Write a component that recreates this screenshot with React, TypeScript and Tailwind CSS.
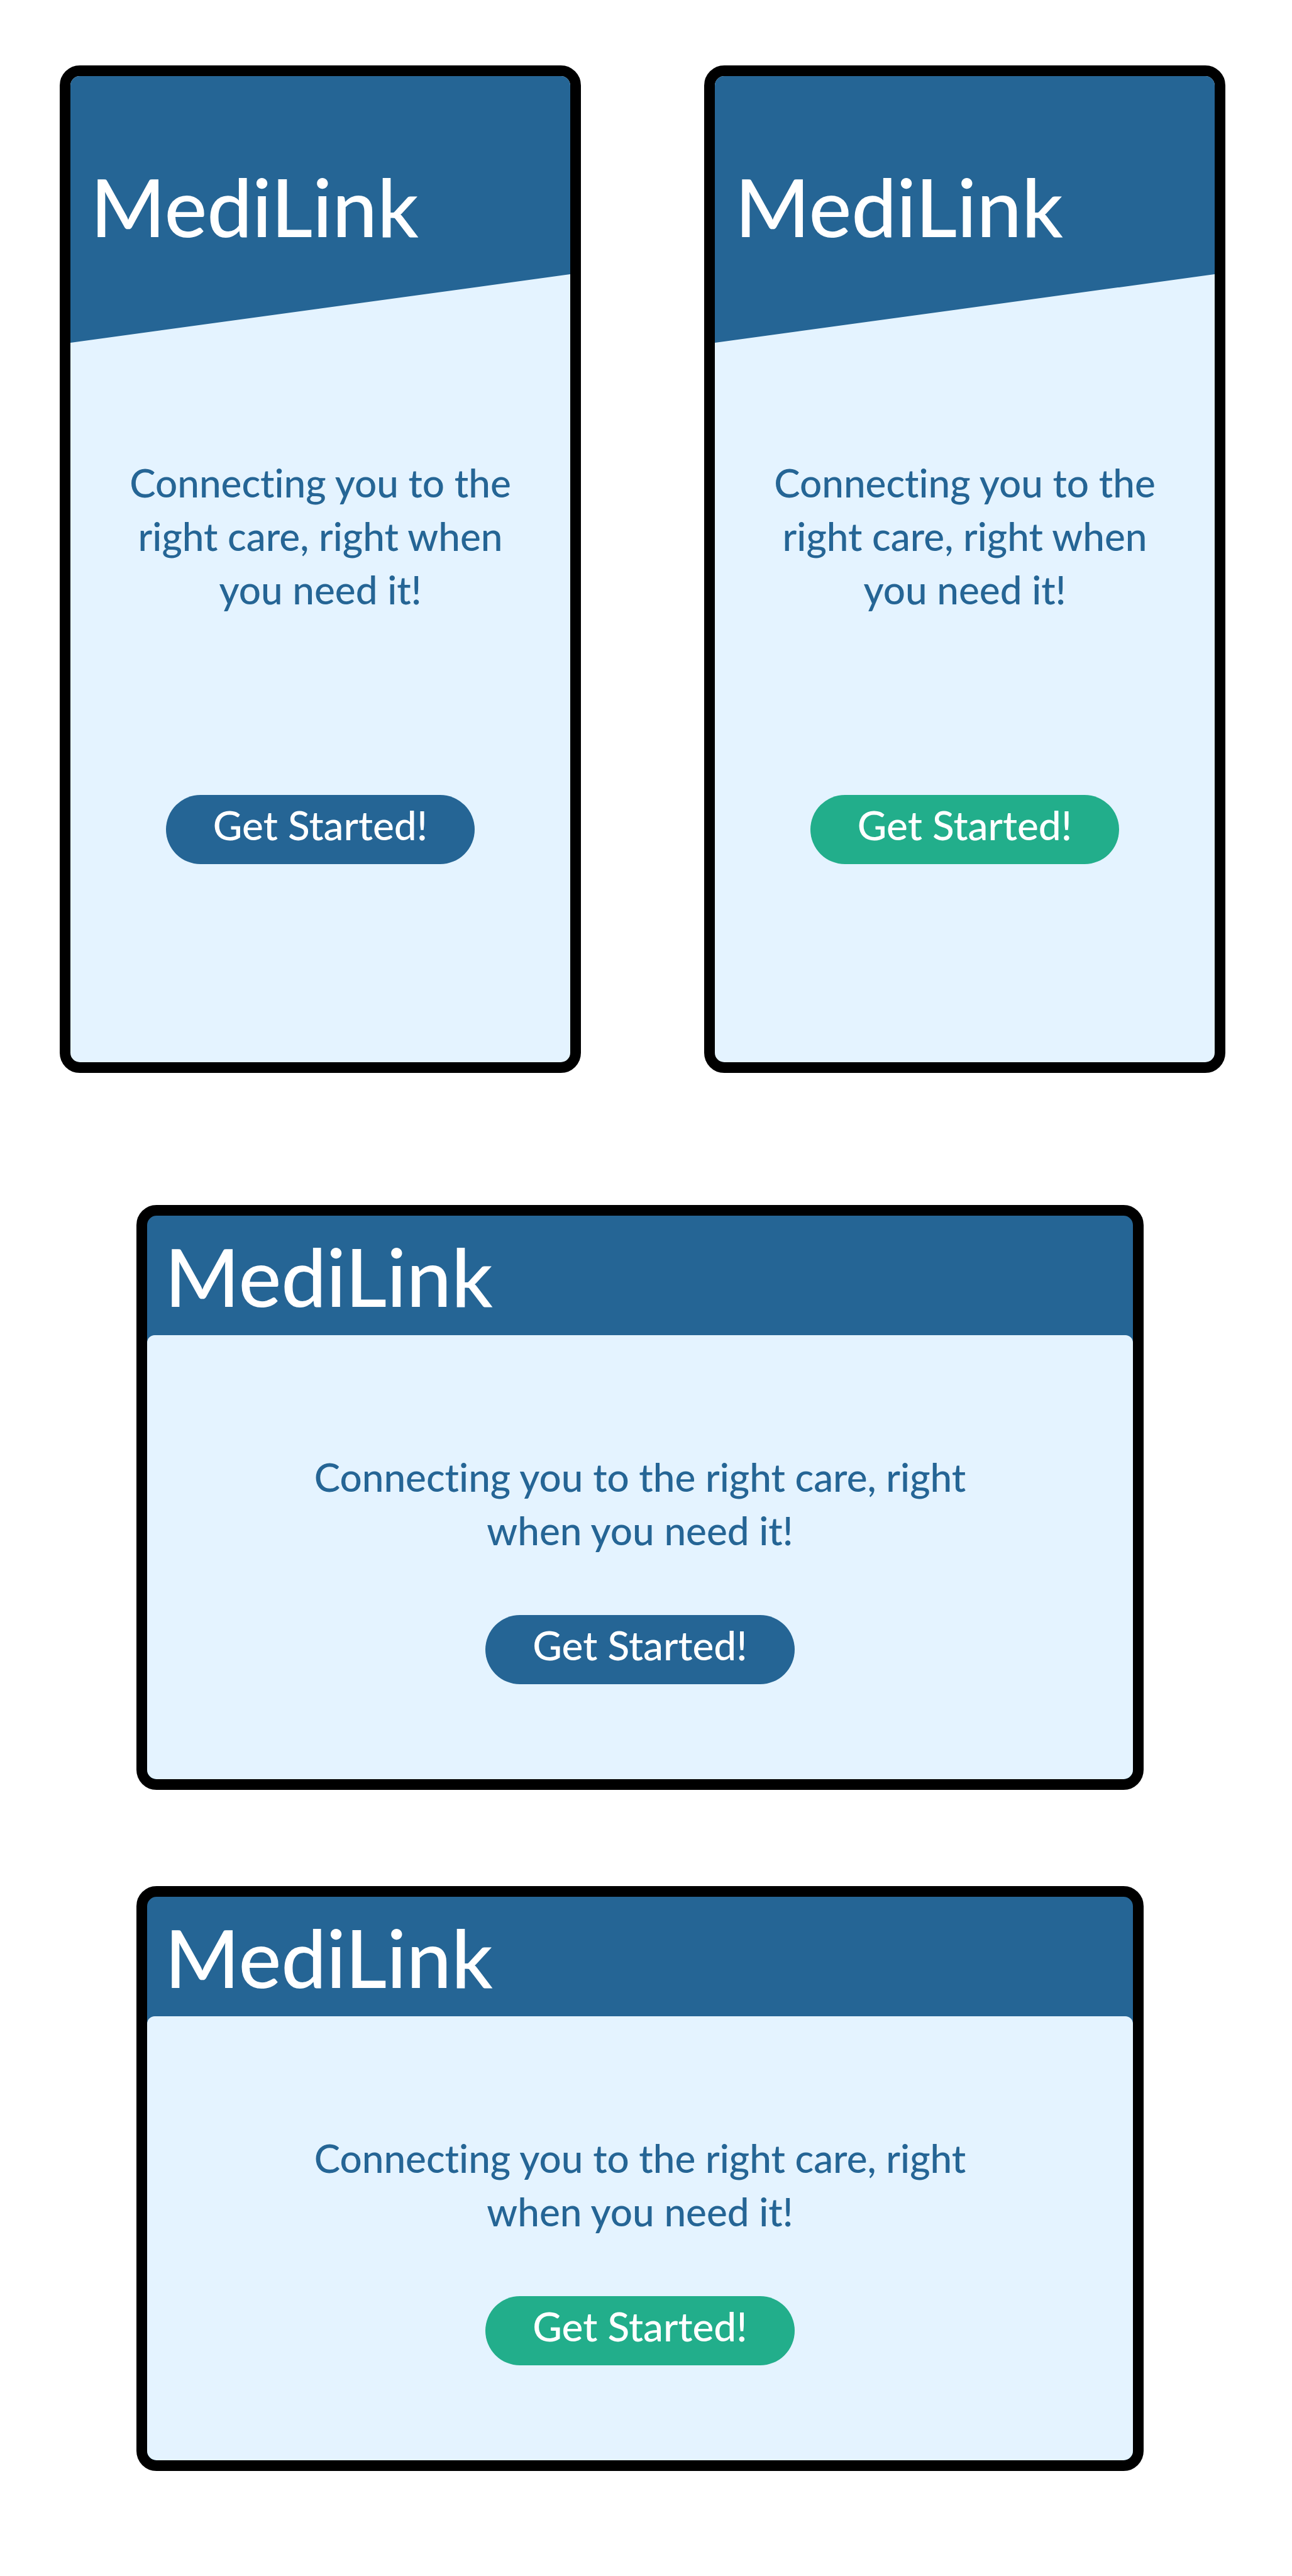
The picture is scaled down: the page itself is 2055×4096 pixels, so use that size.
type Tone = "blue" | "green";

const toneClass: Record<Tone, string> = {
  blue: "bg-[#256595]",
  green: "bg-[#22ae8b]",
};

function Brand() {
  return <h1 className="text-[128px] leading-[130px] font-medium text-white">MediLink</h1>;
}

function Tagline() {
  return (
    <p className="text-center text-[62px] leading-[85px] font-medium text-[#256595]">
      Connecting you to the right care, right when you need it!
    </p>
  );
}

function StartButton({ tone }: { tone: Tone }) {
  return (
    <button
      type="button"
      className={`rounded-full px-[75px] pt-[5px] pb-[20px] text-[64px] leading-[85px] font-medium whitespace-nowrap text-white ${toneClass[tone]}`}
    >
      Get Started!
    </button>
  );
}

function PhoneScreen({ tone }: { tone: Tone }) {
  return (
    <section className="overflow-hidden rounded-[32px] border-[17px] border-black bg-[#e4f3ff]">
      <header className="bg-[#256595] px-8 pt-[142px] pb-[152px] [clip-path:polygon(0_0,100%_0,100%_74.3%,0_100%)]">
        <Brand />
      </header>
      <div className="flex flex-col items-center gap-[284px] px-[70px] pt-[180px] pb-[315px]">
        <Tagline />
        <StartButton tone={tone} />
      </div>
    </section>
  );
}

function WideScreen({ tone }: { tone: Tone }) {
  return (
    <section className="overflow-hidden rounded-[32px] border-[17px] border-black bg-[#256595]">
      <header className="px-7 pt-[31px] pb-[29px]">
        <Brand />
      </header>
      <div className="flex flex-col items-center gap-[92px] rounded-t-[12px] bg-[#e4f3ff] px-[220px] pt-[183px] pb-[151px]">
        <Tagline />
        <StartButton tone={tone} />
      </div>
    </section>
  );
}

export default function App() {
  return (
    <main className="min-h-screen bg-white pt-[104px] pb-[166px] font-['Lato',sans-serif] [font-variant-ligatures:none]">
      <div className="grid grid-cols-2 gap-[196px] pr-[106px] pl-[95px]">
        <PhoneScreen tone="blue" />
        <PhoneScreen tone="green" />
      </div>
      <div className="mt-[210px] flex flex-col gap-[153px] pr-[236px] pl-[217px]">
        <WideScreen tone="blue" />
        <WideScreen tone="green" />
      </div>
    </main>
  );
}
